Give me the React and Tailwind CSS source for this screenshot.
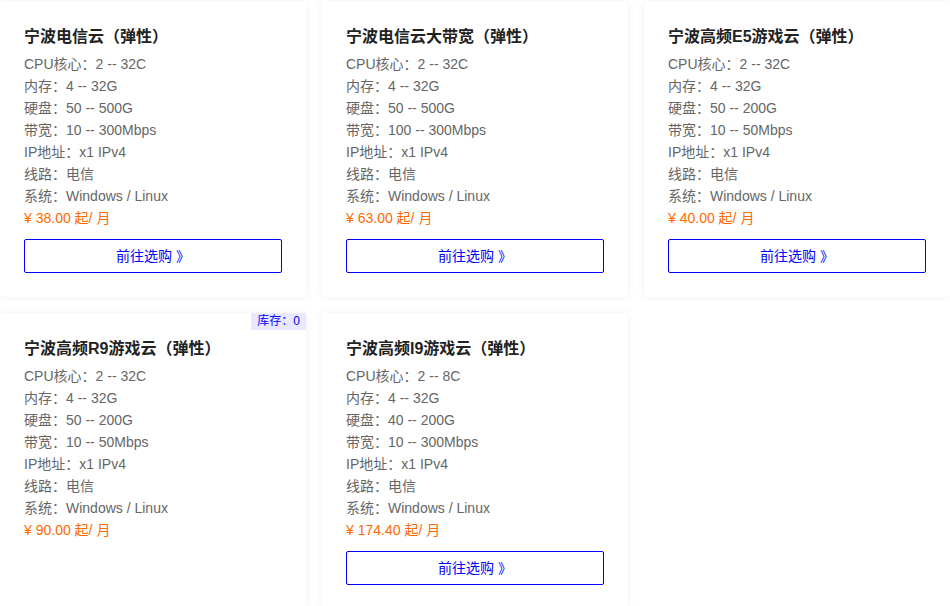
import React from 'react';

const products = [
  {
    name: '宁波电信云（弹性）',
    specs: ['CPU核心：2 -- 32C', '内存：4 -- 32G', '硬盘：50 -- 500G', '带宽：10 -- 300Mbps', 'IP地址：x1 IPv4', '线路：电信', '系统：Windows / Linux'],
    price: '38.00',
    buy: true,
  },
  {
    name: '宁波电信云大带宽（弹性）',
    specs: ['CPU核心：2 -- 32C', '内存：4 -- 32G', '硬盘：50 -- 500G', '带宽：100 -- 300Mbps', 'IP地址：x1 IPv4', '线路：电信', '系统：Windows / Linux'],
    price: '63.00',
    buy: true,
  },
  {
    name: '宁波高频E5游戏云（弹性）',
    specs: ['CPU核心：2 -- 32C', '内存：4 -- 32G', '硬盘：50 -- 200G', '带宽：10 -- 50Mbps', 'IP地址：x1 IPv4', '线路：电信', '系统：Windows / Linux'],
    price: '40.00',
    buy: true,
  },
  {
    name: '宁波高频R9游戏云（弹性）',
    specs: ['CPU核心：2 -- 32C', '内存：4 -- 32G', '硬盘：50 -- 200G', '带宽：10 -- 50Mbps', 'IP地址：x1 IPv4', '线路：电信', '系统：Windows / Linux'],
    price: '90.00',
    buy: false,
    stock: 0,
  },
  {
    name: '宁波高频I9游戏云（弹性）',
    specs: ['CPU核心：2 -- 8C', '内存：4 -- 32G', '硬盘：40 -- 200G', '带宽：10 -- 300Mbps', 'IP地址：x1 IPv4', '线路：电信', '系统：Windows / Linux'],
    price: '174.40',
    buy: true,
  },
];

function ProductCard({ product }) {
  return (
    <div className="relative bg-white rounded-sm shadow-[0_0_10px_rgba(0,0,0,0.06)] px-6 pt-6 pb-6">
      {product.stock !== undefined && (
        <span className="absolute top-0 right-0 bg-[#e8e8ff] text-[#0000ff] text-[12px] leading-[17px] px-[6px]">
          库存：{product.stock}
        </span>
      )}
      <h3 className="text-[16px] leading-6 font-bold text-[#222] mb-1">{product.name}</h3>
      {product.specs.map((s) => (
        <p key={s} className="text-[14px] leading-[22px] text-[#666]">{s}</p>
      ))}
      <p className="text-[14px] leading-[22px] text-[#ff6a00]">¥ {product.price} 起/ 月</p>
      {product.buy && (
        <button className="mt-[10px] w-full h-[34px] border border-[#0000ff] rounded-[2px] text-[#0000ff] text-[14px] bg-white">
          前往选购 》
        </button>
      )}
    </div>
  );
}

export default function App() {
  return (
    <div
      className="bg-white min-h-[606px] pt-px"
      style={{ fontFamily: '"Liberation Sans", "Noto Sans CJK SC", sans-serif' }}
    >
      <div className="grid grid-cols-3 gap-4">
        {products.map((p) => (
          <ProductCard key={p.name} product={p} />
        ))}
      </div>
    </div>
  );
}
